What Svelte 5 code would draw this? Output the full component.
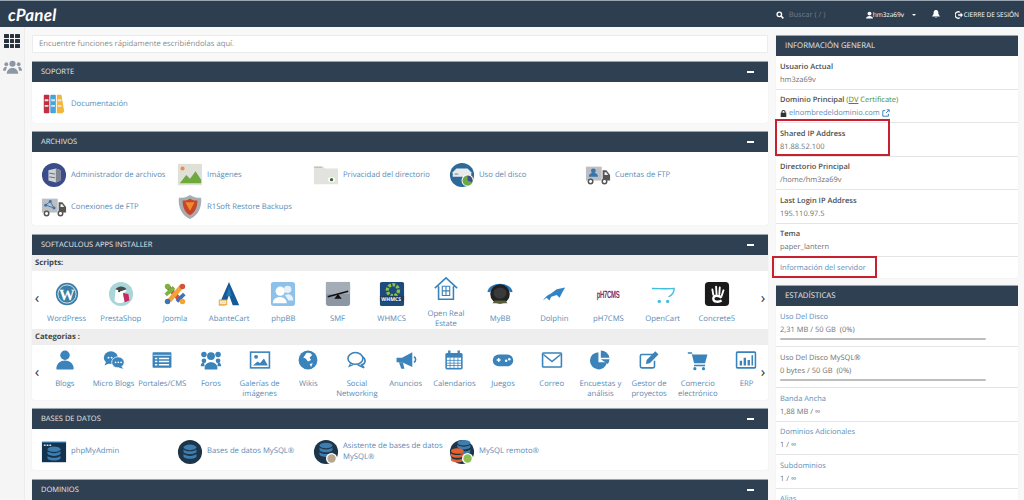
<script>
  const B = '#3a83bb'
  const db = (cx, cy, c = '#3d7db0') => `<ellipse cx="${cx}" cy="${cy-6}" rx="7" ry="3" fill="${c}"/><path d="M${cx-7} ${cy-4}c2 3 12 3 14 0v3c-2 3-12 3-14 0zM${cx-7} ${cy+1}c2 3 12 3 14 0v3c-2 3-12 3-14 0z" fill="${c}"/>`

  const icons = {
    docs: `<rect x="3" y="4" width="6" height="20" rx="1" fill="#c0303f"/><rect x="10" y="4" width="6" height="20" rx="1" fill="#45a5dc"/><path d="M17 4h5l3 18-2 2h-6z" fill="#f2b63c"/><path d="M4 9h4v2H4zM4 15h4v2H4zM11 9h4v2h-4zM11 15h4v2h-4zM18 9h4v2h-4zM18 15h4v2h-4z" fill="#e8e8e8"/>`,
    files: `<circle cx="14" cy="14" r="13" fill="#3c4c8a"/><path d="M8 9l8-2 5 2v11l-5 2-8-2z" fill="#cfd2d6"/><path d="M16 7l5 2v11l-5 2z" fill="#7e858e"/><path d="M9 12l6 1M9 16l6 1" stroke="#666" fill="none"/>`,
    images: `<rect x="1" y="2" width="26" height="23" fill="#dfe0d8"/><circle cx="6" cy="7" r="2.2" fill="#ee8a4a"/><path d="M3 23l7-9 4 4 6-8 6 9v4z" fill="#6fa83f"/>`,
    privacy: `<path d="M1 5h10l2 2h14v17H1z" fill="#e2e2de"/><path d="M1 5h9v1H1z" fill="#aaa"/><ellipse cx="20" cy="19" rx="4" ry="2.6" fill="#fff"/><circle cx="20" cy="19" r="1.8" fill="#3e6b35"/>`,
    disk: `<circle cx="14" cy="14" r="13" fill="#2d6a97"/><path d="M4 11l4-4h12l4 4v5H4z" fill="#e8ebee"/><path d="M6 13h4" stroke="#777"/><circle cx="20" cy="20" r="6.5" fill="#fff"/><circle cx="20" cy="20" r="5.5" fill="#68a94a"/><path d="M20 20v-5.5a5.5 5.5 0 0 1 5 7.5z" fill="#4a4a8c"/>`,
    ftpacc: `<rect x="1" y="5" width="17" height="15" fill="#bdbec2"/><circle cx="9" cy="9.5" r="2.6" fill="#3577ad"/><path d="M4 16c0-6 10-6 10 0z" fill="#3577ad"/><path d="M19 9h4l4 5v6h-8z" fill="#555"/><path d="M21 11h2l2 3h-4z" fill="#eee"/><circle cx="6" cy="21" r="2.4" fill="#fff" stroke="#555" stroke-width="1.6"/><circle cx="21" cy="21" r="2.4" fill="#fff" stroke="#555" stroke-width="1.6"/>`,
    ftpcon: `<rect x="1" y="5" width="17" height="15" fill="#bdbec2"/><path d="M5 12l5-4 4 7-9-3" stroke="#3577ad" fill="none"/><circle cx="5" cy="12" r="1.6" fill="#3577ad"/><circle cx="10" cy="8" r="1.6" fill="#3577ad"/><circle cx="14" cy="15" r="1.6" fill="#3577ad"/><path d="M19 9h4l4 5v6h-8z" fill="#555"/><path d="M21 11h2l2 3h-4z" fill="#eee"/><circle cx="6" cy="21" r="2.4" fill="#fff" stroke="#555" stroke-width="1.6"/><circle cx="21" cy="21" r="2.4" fill="#fff" stroke="#555" stroke-width="1.6"/>`,
    r1soft: `<path d="M14 1c4 3 8 3 12 3 1 10-3 19-12 23C5 23 1 14 2 4c4 0 8 0 12-3z" fill="#a8adb2"/><path d="M14 5c3 2 6 2 8 2 0 8-3 13-8 16-5-3-8-8-8-16 2 0 5 0 8-2z" fill="#c8452a"/><path d="M9 9h10l-5 9z" fill="#f08a2a"/>`,

    wp: `<circle cx="14" cy="14" r="12" fill="#3b7ea6"/><circle cx="14" cy="14" r="9.800" fill="none" stroke="#fff" stroke-width=".8"/><text x="14" y="20" text-anchor="middle" font-size="17" font-weight="700" fill="#fff" font-family="Liberation Serif">W</text>`,
    presta: `<circle cx="14" cy="14" r="13" fill="#a9d6d8"/><path d="M8 11c0-6 10-6 12 0l-4 2 2 9c-4 3-9 2-11-1z" fill="#fff"/><path d="M8 9c3-4 9-4 12 0l-6 2z" fill="#4a4a4a"/><path d="M16 13l6 1 1 7-5 2z" fill="#c8285c"/><circle cx="12" cy="11" r="1.200" fill="#333"/>`,
    joomla: `<path d="M6 6l14 15" stroke="#d9513a" stroke-width="5"/><path d="M21 6L8 21" stroke="#f0a43a" stroke-width="5"/><path d="M4 15l9-8" stroke="#7cb342" stroke-width="4"/><path d="M24 14l-8 8" stroke="#3d74b8" stroke-width="4"/><circle cx="6" cy="6" r="3" fill="#7cb342"/><circle cx="22" cy="6" r="3" fill="#d9513a"/><circle cx="6" cy="22" r="3" fill="#3d74b8"/><circle cx="22" cy="22" r="3" fill="#f0a43a"/>`,
    abante: `<path d="M14 1l11 25h-7l-4-11-4 11H3z" fill="#155a94"/><path d="M3 20h9v6H3z" fill="#e8a53a"/><path d="M4 21h7v4H4z" fill="#f2e6cf"/><path d="M14 6l3 10h-6z" fill="#1f78b8"/>`,
    phpbb: `<rect x="1" y="1" width="26" height="26" rx="3" fill="#8ec1ea"/><circle cx="11" cy="11" r="5" fill="#fff"/><circle cx="19" cy="9" r="4" fill="#e6f1fa"/><path d="M3 24c0-9 15-9 15 0z" fill="#fff"/><path d="M16 15c5-2 9 0 9 6h-5z" fill="#e6f1fa"/>`,
    smf: `<rect x="1" y="1" width="26" height="26" rx="3" fill="#8d97a3"/><path d="M1 1h26v13H1z" fill="#a4adb7"/><path d="M3 17l22-6" stroke="#111" stroke-width="1.500"/><path d="M14 14l4 5h-8z" fill="#111"/>`,
    whmcs: `<rect x="1" y="1" width="26" height="26" rx="2" fill="#1d4c7c"/><circle cx="15" cy="10" r="6" fill="none" stroke="#8cc152" stroke-width="3.500" stroke-dasharray="3 1.500"/><path d="M1 16h26v6H1z" fill="#1d3c5c"/><text x="2.500" y="21.500" font-size="5.500" font-weight="700" fill="#fff" font-family="Open Sans">WHMCS</text>`,
    ore: `<path d="M2 13L14 2l12 11M6 11v14h16V11" fill="none" stroke="${B}" stroke-width="1.700"/><path d="M10 11h8v10h-8z" fill="none" stroke="${B}" stroke-width="1.200"/><path d="M10 16h8M14 11v10" stroke="${B}" stroke-width="1.200"/>`,
    mybb: `<path d="M2 12C3 2 25 2 26 12" fill="none" stroke="#2a7ab8" stroke-width="3"/><circle cx="14" cy="14" r="10.500" fill="#222"/><path d="M6 24h16l-2-3H8z" fill="#55603a"/><ellipse cx="14" cy="13" rx="7" ry="6" fill="#3a3a3a"/>`,
    dolphin: `<path d="M2 21c2-3 5-6 8-7l7-5 9-2-3 5-3 6-3-3-6 2-2 4-3-3z" fill="#2e84c6"/>`,
    ph7: `<text transform="translate(14 18) scale(.8 1.4)" text-anchor="middle" font-size="8" font-weight="700" letter-spacing="-.4" fill="#7d2f63" font-family="Liberation Sans">pH7CMS</text>`,
    opencart: `<path d="M2 8c8 0 16 1 24 0 0 3-2 7-6 9" fill="none" stroke="#3fc0e0" stroke-width="1.500"/><circle cx="10" cy="22" r="1.800" fill="#3fc0e0"/><circle cx="19" cy="22" r="1.800" fill="#3fc0e0"/>`,
    concrete: `<rect x="1" y="1" width="26" height="26" rx="4" fill="#1b1b1b"/><path d="M9 9l1 6M13 6l.5 8M17 7l-.5 7M21 10l-2 6" stroke="#fff" stroke-width="2" stroke-linecap="round"/><path d="M19 18c-3-3-9-3-9 1 0 4 6 4 9 2" fill="none" stroke="#fff" stroke-width="2.500"/>`,
    cl: `<path d="M1 2h2v24H1z" fill="#bbb"/><path d="M3 6h3v16H3z" fill="#e4e4e4"/>`,

    blogs: `<circle cx="14" cy="8" r="6" fill="${B}"/><path d="M3 25c0-14 22-14 22 0 0 1-1 1-2 1H5c-1 0-2 0-2-1z" fill="${B}"/>`,
    micro: `<ellipse cx="10" cy="11" rx="9" ry="8" fill="${B}"/><path d="M4 16l-2 5 6-3z" fill="${B}"/><ellipse cx="19" cy="17" rx="8" ry="7" fill="${B}" stroke="#fff"/><path d="M23 22l3 3-6-1z" fill="${B}"/><g fill="#fff"><circle cx="7" cy="11" r="1.200"/><circle cx="11" cy="11" r="1.200"/><circle cx="16" cy="17" r="1.100"/><circle cx="19.500" cy="17" r="1.100"/><circle cx="23" cy="17" r="1.100"/></g>`,
    portal: `<rect x="2" y="4" width="24" height="20" rx="1" fill="${B}"/><path d="M3 8h22" stroke="#fff"/><path d="M5 11h3v2H5zM5 15h3v2H5zM5 19h3v2H5zM10 11h13v2H10zM10 15h13v2H10zM10 19h13v2H10z" fill="#fff"/>`,
    foros: `<circle cx="14" cy="9" r="5" fill="${B}"/><circle cx="5" cy="7" r="3.500" fill="${B}"/><circle cx="23" cy="7" r="3.500" fill="${B}"/><circle cx="5" cy="15" r="3" fill="${B}"/><circle cx="23" cy="15" r="3" fill="${B}"/><path d="M6 26c-2-12 18-12 16 0z" fill="${B}"/><path d="M1 22c0-4 3-5 4-5l1 5zM27 22c0-4-3-5-4-5l-1 5z" fill="${B}"/>`,
    gal: `<rect x="2" y="4" width="24" height="20" fill="none" stroke="${B}" stroke-width="2"/><circle cx="9" cy="10" r="2.500" fill="${B}"/><path d="M5 21l6-5 3 2 5-6 5 9z" fill="${B}"/>`,
    wikis: `<circle cx="14" cy="14" r="12" fill="${B}"/><path d="M12 5c3-1 7 0 7 3l-3 3 2 3-4 2-3-4-3-1zM16 19l4-1-2 5z" fill="#fff"/>`,
    social: `<ellipse cx="12" cy="12" rx="9.500" ry="7.500" fill="none" stroke="${B}" stroke-width="2"/><path d="M6 18l-2 4 5-2" fill="none" stroke="${B}" stroke-width="1.500"/><path d="M21 10c5 3 4 9-1 10l3 4-8-4" fill="none" stroke="${B}" stroke-width="2"/>`,
    anun: `<path d="M2 11h7l13-7v19L9 17H2z" fill="${B}"/><path d="M24 10c3 1 3 6 0 7" fill="none" stroke="${B}" stroke-width="2"/><path d="M5 17h5l2 8H8z" fill="${B}"/>`,
    cal: `<rect x="3" y="5" width="22" height="21" rx="2" fill="${B}"/><path d="M8 2v6M20 2v6" stroke="${B}" stroke-width="3"/><path d="M5 11h18v13H5z" fill="#fff"/><path d="M5 14.500h18M5 18h18M5 21h18M9 11v13M14 11v13M19 11v13" stroke="${B}"/>`,
    game: `<rect x="1" y="7" width="26" height="15" rx="7.500" fill="${B}"/><path d="M6 14h5M8.500 11.500v5" stroke="#fff" stroke-width="1.800"/><circle cx="18" cy="15" r="1.600" fill="#fff"/><circle cx="22" cy="13" r="1.600" fill="#fff"/>`,
    mail: `<rect x="2" y="5" width="24" height="18" rx="1" fill="none" stroke="${B}" stroke-width="2"/><path d="M3 7l11 9 11-9" fill="none" stroke="${B}" stroke-width="2"/>`,
    pie: `<path d="M12 4a11 11 0 1 0 11 13H12z" fill="${B}"/><path d="M15 2a11 11 0 0 1 11 9H15z" fill="${B}"/><path d="M15 13h11a11 11 0 0 1-2 6z" fill="${B}"/>`,
    edit: `<path d="M19 7H5a2 2 0 0 0-2 2v13a2 2 0 0 0 2 2h14a2 2 0 0 0 2-2v-7" fill="none" stroke="${B}" stroke-width="2"/><path d="M10 19l1-5L22 3l4 4-11 11z" fill="${B}"/>`,
    cart: `<path d="M1 4h5l1 3h19l-3 11H9L6 6H1z" fill="${B}"/><path d="M9 20h14v2H9z" fill="${B}"/><circle cx="10" cy="25" r="2" fill="${B}"/><circle cx="21" cy="25" r="2" fill="${B}"/>`,
    erp: `<rect x="2" y="4" width="24" height="20" rx="1" fill="none" stroke="${B}" stroke-width="2"/><path d="M6 15h3v6H6zM11 11h3v10h-3zM16 14h3v7h-3zM21 8h2v13h-2z" fill="${B}"/>`,

    pma: `<rect x="1" y="3" width="26" height="22" fill="#13324e"/><path d="M1 3h26v1H1z" fill="#3b8ac0"/><path d="M3 6h2v1.500H3zM6 6h2v1.500H6zM9 6h2v1.500H9z" fill="#ddd"/>${db(14, 17)}`,
    mysql: `<circle cx="14" cy="14" r="13" fill="#1d3549"/>${db(14, 15)}`,
    mywiz: `<circle cx="14" cy="14" r="13" fill="#1d3549"/>${db(14, 13)}<circle cx="20" cy="21" r="6" fill="#fff"/><circle cx="20" cy="21" r="4.500" fill="#b8a78e"/>`,
    myrem: `<circle cx="14" cy="14" r="13" fill="#1d3549"/>${db(16, 10)}${db(9, 19, '#e8612c')}<circle cx="20" cy="21" r="6" fill="#fff"/><circle cx="20" cy="21" r="4.500" fill="#8cc152"/>`
  }

  const soporte = [{ i: 'docs', t: 'Documentación' }]
  const archivos = [
    { i: 'files', t: 'Administrador de archivos' },
    { i: 'images', t: 'Imágenes' },
    { i: 'privacy', t: 'Privacidad del directorio' },
    { i: 'disk', t: 'Uso del disco' },
    { i: 'ftpacc', t: 'Cuentas de FTP' },
    { i: 'ftpcon', t: 'Conexiones de FTP' },
    { i: 'r1soft', t: 'R1Soft Restore Backups' }
  ]
  const bases = [
    { i: 'pma', t: 'phpMyAdmin' },
    { i: 'mysql', t: 'Bases de datos MySQL®' },
    { i: 'mywiz', t: 'Asistente de bases de datos MySQL®' },
    { i: 'myrem', t: 'MySQL remoto®' }
  ]
  const scripts = [
    ['wp', 'WordPress'], ['presta', 'PrestaShop'], ['joomla', 'Joomla'], ['abante', 'AbanteCart'],
    ['phpbb', 'phpBB'], ['smf', 'SMF'], ['whmcs', 'WHMCS'], ['ore', 'Open Real Estate'],
    ['mybb', 'MyBB'], ['dolphin', 'Dolphin'], ['ph7', 'pH7CMS'], ['opencart', 'OpenCart'],
    ['concrete', 'Concrete5'], ['cl', 'Cl']
  ]
  const categorias = [
    ['blogs', 'Blogs'], ['micro', 'Micro Blogs'], ['portal', 'Portales/CMS'], ['foros', 'Foros'],
    ['gal', 'Galerías de imágenes'], ['wikis', 'Wikis'], ['social', 'Social Networking'], ['anun', 'Anuncios'],
    ['cal', 'Calendarios'], ['game', 'Juegos'], ['mail', 'Correo'], ['pie', 'Encuestas y análisis'],
    ['edit', 'Gestor de proyectos'], ['cart', 'Comercio electrónico'], ['erp', 'ERP']
  ]
  const stats = [
    { t: 'Uso Del Disco', v: '2,31 MB / 50 GB', p: '(0%)', link: true, bar: true },
    { t: 'Uso Del Disco MySQL®', v: '0 bytes / 50 GB', p: '(0%)', bar: true },
    { t: 'Banda Ancha', v: '1,88 MB / ∞', link: true },
    { t: 'Dominios Adicionales', v: '1 / ∞', link: true },
    { t: 'Subdominios', v: '1 / ∞', link: true },
    { t: 'Alias', v: '1 / ∞', link: true }
  ]
</script>

{#snippet icon(name, size)}
  <svg class="ico" viewBox="0 0 28 28" width={size} height={size}>{@html icons[name]}</svg>
{/snippet}

{#snippet head(title)}
  <header class="phead"><span>{title}</span><i class="minus"></i></header>
{/snippet}

{#snippet links(items)}
  <div class="links">
    {#each items as it}
      <a class="link">{@render icon(it.i, 26)}<span>{it.t}</span></a>
    {/each}
  </div>
{/snippet}

<div class="page">
  <nav class="top">
    <span class="logo">cPanel</span>
    <div class="tools">
      <svg class="sicon" viewBox="0 0 12 12" width="8" height="8"><circle cx="5" cy="5" r="3.400" fill="none" stroke="#fff" stroke-width="2"/><path d="M7.500 7.500L11 11" stroke="#fff" stroke-width="2.400"/></svg>
      <span class="find">Buscar ( / )</span>
      <svg class="uicon" viewBox="0 0 10 10" width="7" height="8"><circle cx="5" cy="3" r="2.800" fill="#fff"/><path d="M0 10c0-5 10-5 10 0z" fill="#fff"/></svg>
      <span class="user">hm3za69v</span>
      <i class="caret"></i>
      <svg class="bell" viewBox="0 0 10 11" width="8" height="9"><path d="M5 0c3 0 3 3 3 5l2 3H0l2-3c0-2 0-5 3-5zM4 9h2a1 1 0 0 1-2 0z" fill="#fff"/></svg>
      <svg class="out" viewBox="0 0 10 10" width="8" height="8"><path d="M6 1.500A4 4 0 1 0 6 8.500" fill="none" stroke="#fff" stroke-width="1.600"/><path d="M4 4h3V2l3 3-3 3V6H4z" fill="#fff"/></svg>
      <span class="logout">CIERRE DE SESIÓN</span>
    </div>
  </nav>

  <div class="body">
    <aside class="side">
      <div class="grid9">
        {#each Array(9) as _}<i></i>{/each}
      </div>
      <svg viewBox="0 0 20 14" width="19" height="14"><g fill="#8d97a3"><circle cx="10" cy="3.500" r="3.200"/><circle cx="3.500" cy="4" r="2"/><circle cx="16.500" cy="4" r="2"/><path d="M4 14c0-8 12-8 12 0zM0 11c0-4 3-5 4-4l-1 4zM20 11c0-4-3-5-4-4l1 4z"/></g></svg>
    </aside>

    <main class="main">
      <div class="search">Encuentre funciones rápidamente escribiéndolas aquí.</div>

      <section class="panel">
        {@render head('SOPORTE')}
        <div class="pbody one">{@render links(soporte)}</div>
      </section>

      <section class="panel">
        {@render head('ARCHIVOS')}
        <div class="pbody two">{@render links(archivos)}</div>
      </section>

      <section class="panel">
        {@render head('SOFTACULOUS APPS INSTALLER')}
        <div class="soft">
          <div class="strip">Scripts:</div>
          <div class="carousel sc">
            <span class="arrow">‹</span>
            <div class="track">
              {#each scripts as [i, t]}
                <a class="app">{@render icon(i, 26)}<span>{t}</span></a>
              {/each}
            </div>
            <span class="arrow">›</span>
          </div>
          <div class="strip">Categorias :</div>
          <div class="carousel ca">
            <span class="arrow">‹</span>
            <div class="track">
              {#each categorias as [i, t]}
                <a class="app">{@render icon(i, 22)}<span>{t}</span></a>
              {/each}
            </div>
            <span class="arrow">›</span>
          </div>
        </div>
      </section>

      <section class="panel">
        {@render head('BASES DE DATOS')}
        <div class="pbody one">{@render links(bases)}</div>
      </section>

      <section class="panel">
        {@render head('DOMINIOS')}
      </section>
    </main>

    <div class="right">
      <section class="panel">
        <header class="phead rh"><span>INFORMACIÓN GENERAL</span></header>
        <div class="info">
          <div class="row"><b>Usuario Actual</b><span>hm3za69v</span></div>
          <div class="row">
            <b>Dominio Principal <em>(<u>DV</u> Certificate)</em></b>
            <span class="dom">
              <svg viewBox="0 0 10 10" width="7" height="7"><path d="M2 4V3a3 3 0 0 1 6 0v1h1v6H1V4zm1.500 0h3V3a1.500 1.500 0 0 0-3 0z" fill="#333"/></svg>
              <a>elnombredeldominio.com</a>
              <svg viewBox="0 0 10 10" width="8" height="8"><path d="M8 6v3H1V2h3M5 5l4-4M6 1h3v3" fill="none" stroke="#3a83bb" stroke-width="1.200"/></svg>
            </span>
          </div>
          <div class="row"><b>Shared IP Address</b><span>81.88.52.100</span></div>
          <div class="row"><b>Directorio Principal</b><span>/home/hm3za69v</span></div>
          <div class="row"><b>Last Login IP Address</b><span>195.110.97.5</span></div>
          <div class="row"><b>Tema</b><span>paper_lantern</span></div>
          <div class="row last"><a>Información del servidor</a></div>
        </div>
      </section>

      <section class="panel">
        <header class="phead rh"><span>ESTADÍSTICAS</span></header>
        <div class="info">
          {#each stats as s}
            <div class="row" class:tall={s.bar}>
              {#if s.link}<a>{s.t}</a>{:else}<span class="plain">{s.t}</span>{/if}
              <span>{s.v}{#if s.p}&nbsp;&nbsp;{s.p}{/if}</span>
              {#if s.bar}<i class="bar"></i>{/if}
            </div>
          {/each}
        </div>
      </section>
    </div>

    <i class="mark m1"></i>
    <i class="mark m2"></i>
  </div>
</div>

<style>
  :global(body) {
    margin: 0;
    background: #f8f8f8;
    font-family: "Open Sans", sans-serif;
    font-size: 7.7px;
    color: #707070;
    text-rendering: geometricPrecision;
  }
  a {
    color: #5a8cb6;
  }
  .page {
    width: 1024px;
    height: 500px;
    overflow: hidden;
  }
  .top {
    height: 27px;
    box-sizing: border-box;
    border-top: 1px solid #9aa6b2;
    background: #2d3e50;
    display: flex;
    align-items: center;
    justify-content: space-between;
    padding: 0 5px 0 8px;
    color: #fff;
  }
  .logo {
    font: italic 700 17px Lato, sans-serif;
    letter-spacing: 0.2px;
  }
  .tools {
    display: flex;
    align-items: center;
    font-size: 7.5px;
    padding-top: 1px;
  }
  .sicon {
    margin-right: 5px;
  }
  .find {
    color: #6f7d8a;
    width: 77px;
  }
  .user {
    font-size: 6.6px;
    width: 31px;
    white-space: nowrap;
  }
  .caret {
    width: 0;
    border: 2px solid transparent;
    border-top-color: #fff;
    border-bottom: 0;
    margin: 0 16px 0 8px;
  }
  .bell {
    margin-right: 15px;
  }
  .out {
    margin-right: 1px;
  }
  .logout {
    font-size: 6.5px;
    white-space: nowrap;
  }
  .body {
    position: relative;
    display: flex;
    height: 473px;
    overflow: hidden;
  }
  .side {
    width: 24px;
    flex: none;
    border-right: 1px solid #ececec;
    background: #f5f5f5;
    display: flex;
    flex-direction: column;
    align-items: center;
    gap: 12px;
    padding-top: 7px;
  }
  .grid9 {
    display: grid;
    grid-template-columns: repeat(3, 4.500px);
    gap: 1px;
  }
  .grid9 i {
    height: 4px;
    background: #28323e;
    border-radius: 0.5px;
  }
  .main {
    width: 736px;
    flex: none;
    margin: 8px 8px 0 7px;
    display: flex;
    flex-direction: column;
    gap: 8.4px;
  }
  .search {
    height: 17.6px;
    box-sizing: border-box;
    background: #fff;
    border: 1px solid #ececec;
    padding-left: 6px;
    line-height: 17px;
    color: #8c8c8c;
  }
  .panel {
    background: #fff;
    box-shadow: 0 0 1px #ddd;
    border-radius: 2px;
  }
  .phead {
    height: 21px;
    background: #2f4052;
    border-top: 1px solid #9aa6b2;
    box-sizing: border-box;
    color: #e6e9ec;
    display: flex;
    align-items: center;
    justify-content: space-between;
    padding: 0 14px 0 9px;
    font-size: 7.5px;
  }
  .minus {
    width: 7px;
    height: 2px;
    background: #fff;
  }
  .pbody {
    padding: 0 8px;
  }
  .pbody.one {
    height: 41px;
    box-sizing: border-box;
    padding-top: 4px;
    display: flex;
    align-items: center;
  }
  .pbody.two {
    height: 73px;
    padding-top: 10px;
    box-sizing: border-box;
  }
  .links {
    display: grid;
    grid-template-columns: repeat(5, 136px);
    row-gap: 6px;
    margin-left: 1px;
  }
  .link {
    display: flex;
    align-items: center;
    gap: 4px;
    height: 26px;
    line-height: 11px;
    width: 132px;
  }
  .ico {
    flex: none;
  }
  .soft {
    height: 145px;
    display: flex;
    flex-direction: column;
  }
  .strip {
    background: #eeeeee;
    height: 16px;
    line-height: 17px;
    padding-left: 3px;
    font-weight: 700;
    color: #444;
    flex: none;
  }
  .carousel {
    display: flex;
    align-items: flex-start;
    overflow: hidden;
  }
  .carousel.sc {
    height: 58px;
  }
  .carousel.ca {
    height: 55px;
  }
  .arrow {
    flex: none;
    width: 10px;
    text-align: center;
    font-size: 15px;
    line-height: 15px;
    color: #333;
    margin-top: 20px;
  }
  .track {
    flex: 1;
    display: flex;
    overflow: hidden;
  }
  .app {
    flex: none;
    display: flex;
    flex-direction: column;
    align-items: center;
    text-align: center;
    line-height: 10px;
    box-sizing: border-box;
  }
  .sc .track {
    padding-top: 6px;
    height: 52px;
  }
  .sc .app {
    width: 54.2px;
    height: 52px;
    justify-content: center;
    gap: 7px;
    position: relative;
    left: -2.5px;
  }
  .ca .track {
    padding-top: 4px;
  }
  .ca .app {
    width: 48.7px;
    gap: 8px;
    position: relative;
    left: -1.5px;
  }
  .right {
    width: 242px;
    flex: none;
    margin-top: 8px;
    display: flex;
    flex-direction: column;
    gap: 7px;
    font-size: 7.5px;
  }
  .rh {
    padding: 0 14px 1px 9px;
    font-size: 7.8px;
  }
  .row {
    height: 33.5px;
    box-sizing: border-box;
    border-bottom: 1px solid #e4e4e4;
    padding: 5.5px 4px 0;
    display: flex;
    flex-direction: column;
    gap: 3px;
    line-height: 10px;
    position: relative;
  }
  .row.tall {
    height: 41px;
  }
  .row.last {
    height: 21px;
    border-bottom: 0;
    padding-top: 6px;
  }
  b {
    font-weight: 600;
    color: #4d4d4d;
  }
  em {
    font-style: normal;
    font-weight: 400;
    color: #3d8b3d;
  }
  .plain {
    color: #707070;
  }
  .dom {
    display: flex;
    align-items: center;
    gap: 2px;
  }
  .bar {
    height: 2px;
    width: 206px;
    background: #bdbdbd;
    border-radius: 1px;
  }
  .mark {
    position: absolute;
    box-sizing: border-box;
    border: 2.5px solid #c8202f;
  }
  .m1 {
    left: 775px;
    top: 92px;
    width: 115px;
    height: 37px;
  }
  .m2 {
    left: 772px;
    top: 229px;
    width: 105px;
    height: 22px;
  }
</style>
